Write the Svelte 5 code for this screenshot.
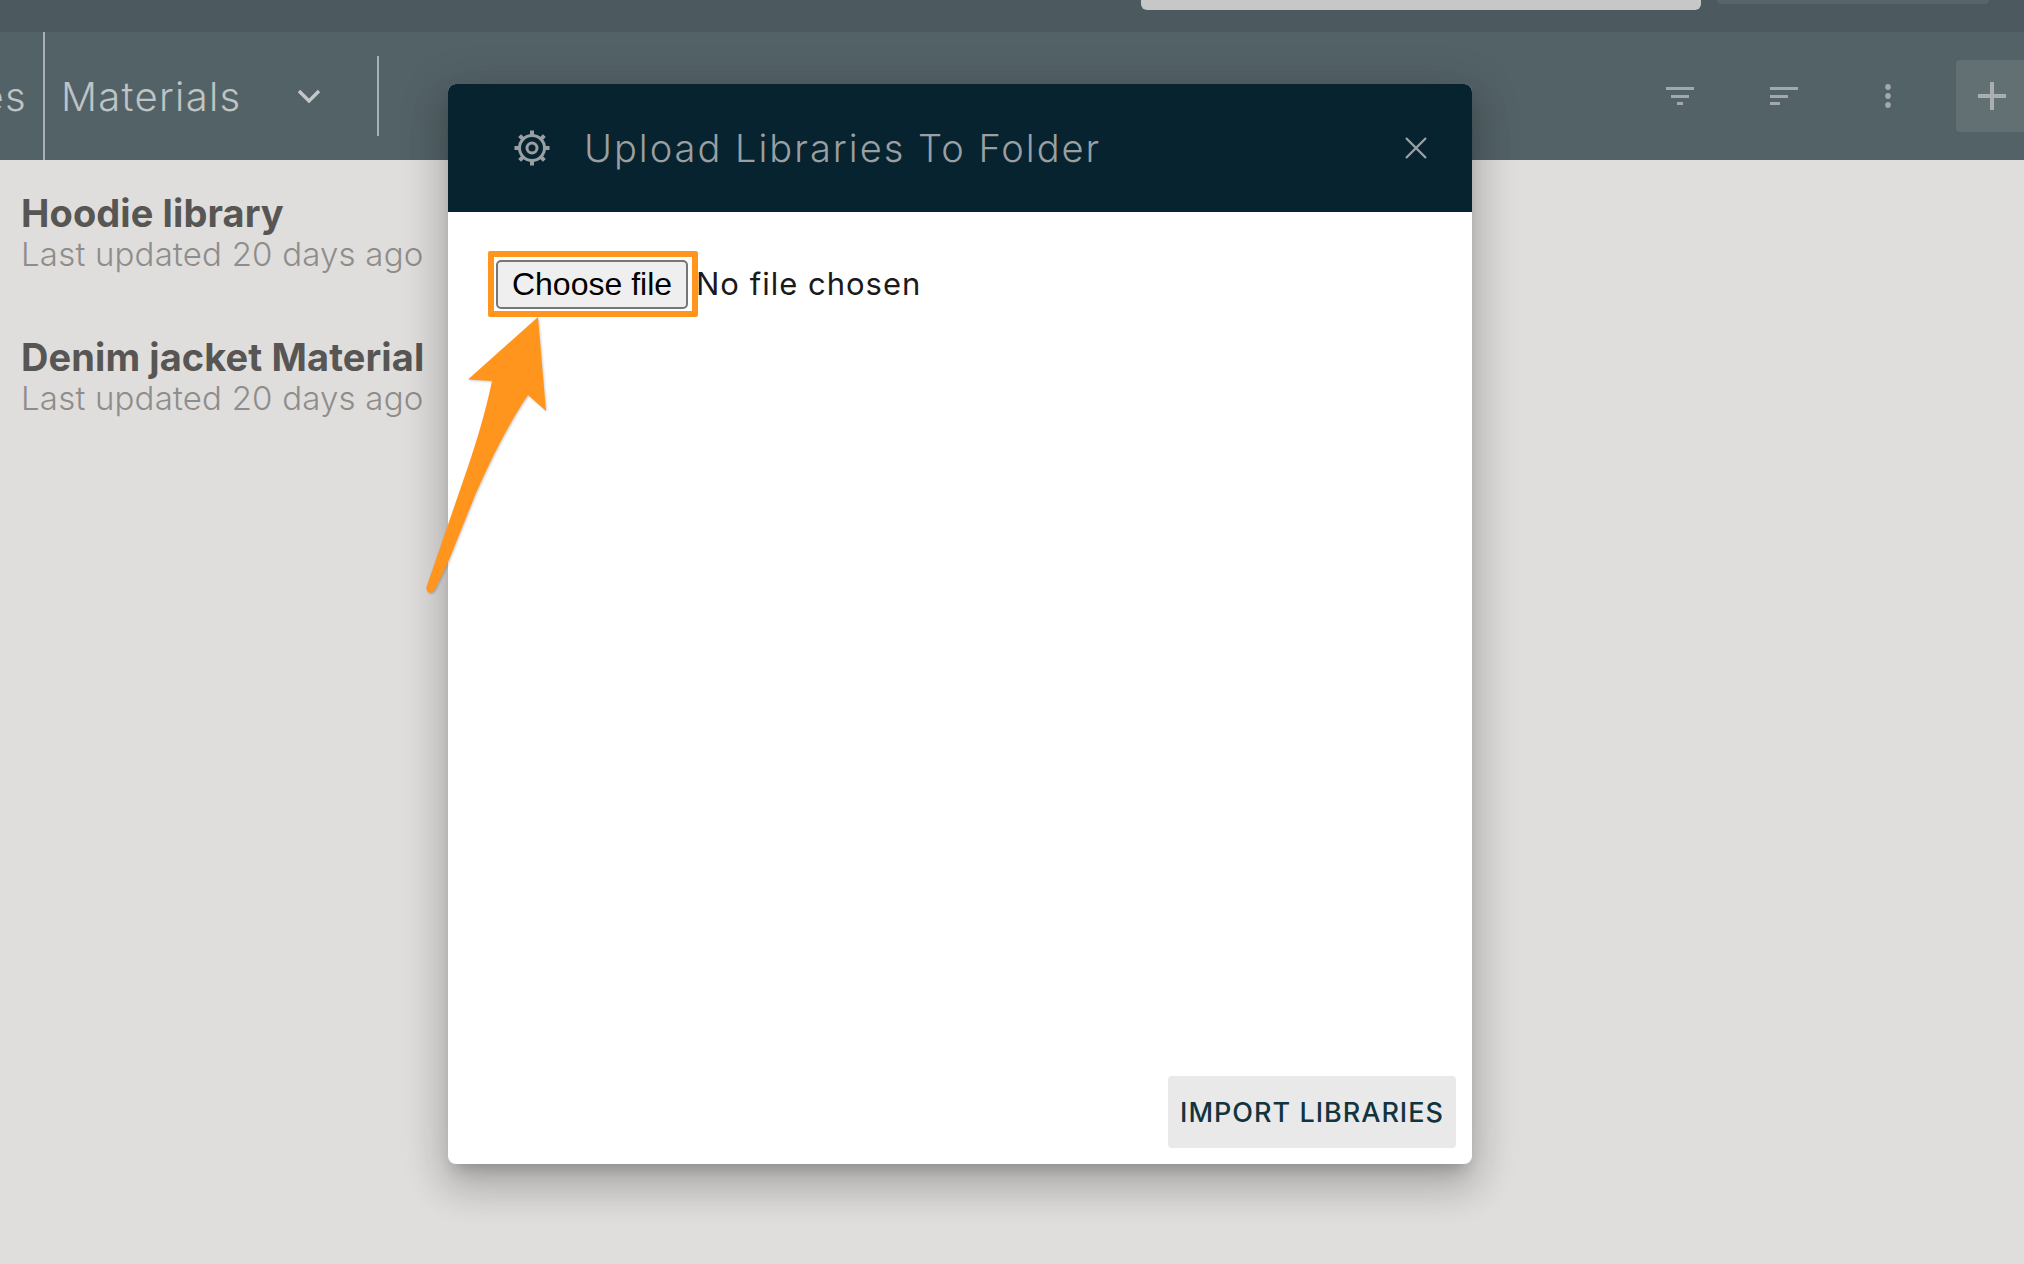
<script lang="ts">
  const libraries = [
    { name: "Hoodie library", updated: "Last updated 20 days ago" },
    { name: "Denim jacket Material", updated: "Last updated 20 days ago" },
  ];
  const teeth = [0, 45, 90, 135, 180, 225, 270, 315];
</script>

<div class="page">
  <header class="topbar">
    <div class="search"></div>
    <div class="account"></div>
  </header>

  <nav class="toolbar">
    <div class="tab-clip"><span class="tab-text">Libraries</span></div>
    <div class="tab">
      <span class="tab-text">Materials</span>
      <svg class="chevron" viewBox="0 0 24 14" width="24" height="14">
        <path d="M2 2l10 10L22 2" fill="none" stroke="#c4c7c8" stroke-width="3.4" />
      </svg>
    </div>
    <div class="spacer"></div>
    <div class="tools">
      <svg viewBox="0 0 28 18" width="28" height="18" class="tool">
        <path d="M0 0h28v3H0zM5 8h18v3H5zM11 15h6v3h-6z" fill="#a2a9ab" />
      </svg>
      <svg viewBox="0 0 28 18" width="28" height="18" class="tool">
        <path d="M0 0h28v3H0zM0 8h18v3H0zM0 15h10v3H0z" fill="#a2a9ab" />
      </svg>
      <svg viewBox="0 0 6 24" width="6" height="24" class="tool">
        <ellipse cx="3" cy="3" rx="2.8" ry="3" fill="#a2a9ab" />
        <ellipse cx="3" cy="12" rx="2.8" ry="3" fill="#a2a9ab" />
        <ellipse cx="3" cy="21" rx="2.8" ry="3" fill="#a2a9ab" />
      </svg>
    </div>
    <div class="add">
      <svg viewBox="0 0 28 28" width="28" height="28">
        <path d="M12 0h4v12h12v4H16v12h-4V16H0v-4h12z" fill="#a9aeb0" />
      </svg>
    </div>
  </nav>

  <main class="list">
    {#each libraries as lib}
      <div class="item">
        <div class="item-name">{lib.name}</div>
        <div class="item-date">{lib.updated}</div>
      </div>
    {/each}
  </main>

  <div class="dialog">
    <div class="dialog-head">
      <svg class="gear" viewBox="0 0 36 36" width="36" height="36">
        <circle cx="18" cy="18" r="12.5" fill="none" stroke="#9a9fa1" stroke-width="3" />
        <circle cx="18" cy="18" r="5" fill="none" stroke="#9a9fa1" stroke-width="3" />
        {#each teeth as deg}
          <rect x="16" y="0.5" width="4" height="5" fill="#9a9fa1" transform="rotate({deg} 18 18)" />
        {/each}
      </svg>
      <h2>Upload Libraries To Folder</h2>
      <svg class="close" viewBox="0 0 22 22" width="22" height="22">
        <path d="M1 1l20 20M21 1L1 21" stroke="#9a9fa2" stroke-width="2.4" fill="none" />
      </svg>
    </div>

    <div class="dialog-body">
      <div class="file-row">
        <div class="highlight">
          <button class="file-btn">Choose file</button>
        </div>
        <span class="file-name">No file chosen</span>
      </div>
    </div>

    <div class="dialog-foot">
      <button class="import">IMPORT LIBRARIES</button>
    </div>
  </div>

  <svg class="arrow" viewBox="0 0 2024 1264" width="2024" height="1264">
    <path
      d="M538 317 L468 379.5 L492 381 Q483 425 461 487 L426.5 587 Q426 592 430 593 Q433 593 435 589 L449 560 L476 493 Q503 432 528 395 L546 411 Z"
      fill="#ff951c"
    />
  </svg>
</div>

<style>
  :global(body) {
    margin: 0;
    background: #dfdedc;
  }

  .page {
    position: relative;
    display: flex;
    flex-direction: column;
    height: 1264px;
    overflow: hidden;
    font-family: Inter, "Liberation Sans", sans-serif;
  }

  .topbar {
    display: flex;
    height: 32px;
    background: #4c5a60;
    padding-left: 1141px;
    gap: 16px;
    box-sizing: border-box;
  }

  .search {
    width: 560px;
    height: 10px;
    background: #c6c7c7;
    border-radius: 0 0 6px 6px;
  }

  .account {
    width: 272px;
    height: 4px;
    background: #56656a;
    border-radius: 0 0 4px 4px;
  }

  .toolbar {
    display: flex;
    align-items: center;
    height: 128px;
    background: #536267;
    color: #bfc3c4;
  }

  .tab-clip {
    display: flex;
    justify-content: flex-end;
    align-items: center;
    width: 43px;
    height: 100%;
    overflow: hidden;
    border-right: 2px solid #a9b0b2;
    flex: none;
  }

  .tab-clip .tab-text {
    padding-right: 16px;
  }

  .tab-text {
    font-size: 40px;
    font-weight: 300;
    letter-spacing: 1.3px;
    white-space: nowrap;
  }

  .tab {
    display: flex;
    align-items: center;
    width: 334px;
    height: 80px;
    padding-left: 16px;
    box-sizing: border-box;
    border-right: 2px solid #a9b0b2;
  }

  .chevron {
    margin-left: 55px;
  }

  .spacer {
    flex: 1;
  }

  .tools {
    display: flex;
    align-items: center;
  }

  .tool:nth-child(1) {
    margin-right: 76px;
  }

  .tool:nth-child(2) {
    margin-right: 87px;
  }

  .add {
    display: flex;
    align-items: center;
    width: 68px;
    height: 72px;
    margin-left: 65px;
    padding-left: 22px;
    box-sizing: border-box;
    background: #626f73;
    border-radius: 4px 0 0 4px;
  }

  .list {
    padding: 31px 21px;
  }

  .item {
    margin-bottom: 62px;
  }

  .item-name {
    font-size: 38px;
    font-weight: 700;
    line-height: 44px;
    letter-spacing: 0.1px;
    color: #575654;
  }

  .item-date {
    font-size: 33px;
    font-weight: 300;
    line-height: 38px;
    letter-spacing: 0.2px;
    color: #8e8d8b;
  }

  .dialog {
    position: absolute;
    left: 448px;
    top: 84px;
    width: 1024px;
    height: 1080px;
    display: flex;
    flex-direction: column;
    background: #fff;
    border-radius: 8px;
    overflow: hidden;
    box-shadow:
      0 11px 15px -7px rgba(0, 0, 0, 0.2),
      0 24px 38px 3px rgba(0, 0, 0, 0.14),
      0 9px 46px 8px rgba(0, 0, 0, 0.12);
  }

  .dialog-head {
    display: flex;
    align-items: center;
    height: 128px;
    flex: none;
    padding-left: 66px;
    padding-right: 45px;
    background: #06232f;
  }

  .dialog-head h2 {
    flex: 1;
    margin: 0 0 0 34px;
    font-size: 38px;
    font-weight: 300;
    letter-spacing: 2px;
    color: #9a9fa2;
  }

  .dialog-body {
    flex: 1;
    padding: 39px 40px;
  }

  .file-row {
    display: flex;
    align-items: center;
  }

  .highlight {
    display: flex;
    padding: 3px 4px 2px 2px;
    border: 6px solid #ff951c;
    border-radius: 2px;
    background: #fff;
  }

  .file-btn {
    width: 192px;
    height: 49px;
    padding: 0;
    font-family: "Liberation Sans", Arial, sans-serif;
    font-size: 32px;
    color: #000;
    background: #efefef;
    border: 2px solid #767676;
    border-radius: 5px;
  }

  .file-name {
    margin-left: -2px;
    margin-top: -1px;
    font-size: 31px;
    letter-spacing: 1px;
    color: #1a1a1a;
  }

  .dialog-foot {
    display: flex;
    justify-content: flex-end;
    padding: 0 16px 16px;
  }

  .import {
    width: 288px;
    height: 72px;
    padding: 0;
    font-family: Inter, "Liberation Sans", sans-serif;
    font-size: 27px;
    font-weight: 500;
    letter-spacing: 1px;
    color: #12343f;
    background: #e9e9e9;
    border: none;
    border-radius: 4px;
  }

  .arrow {
    position: absolute;
    left: 0;
    top: 0;
    pointer-events: none;
    filter: drop-shadow(1px 1px 1px rgba(0, 0, 0, 0.2));
  }
</style>
